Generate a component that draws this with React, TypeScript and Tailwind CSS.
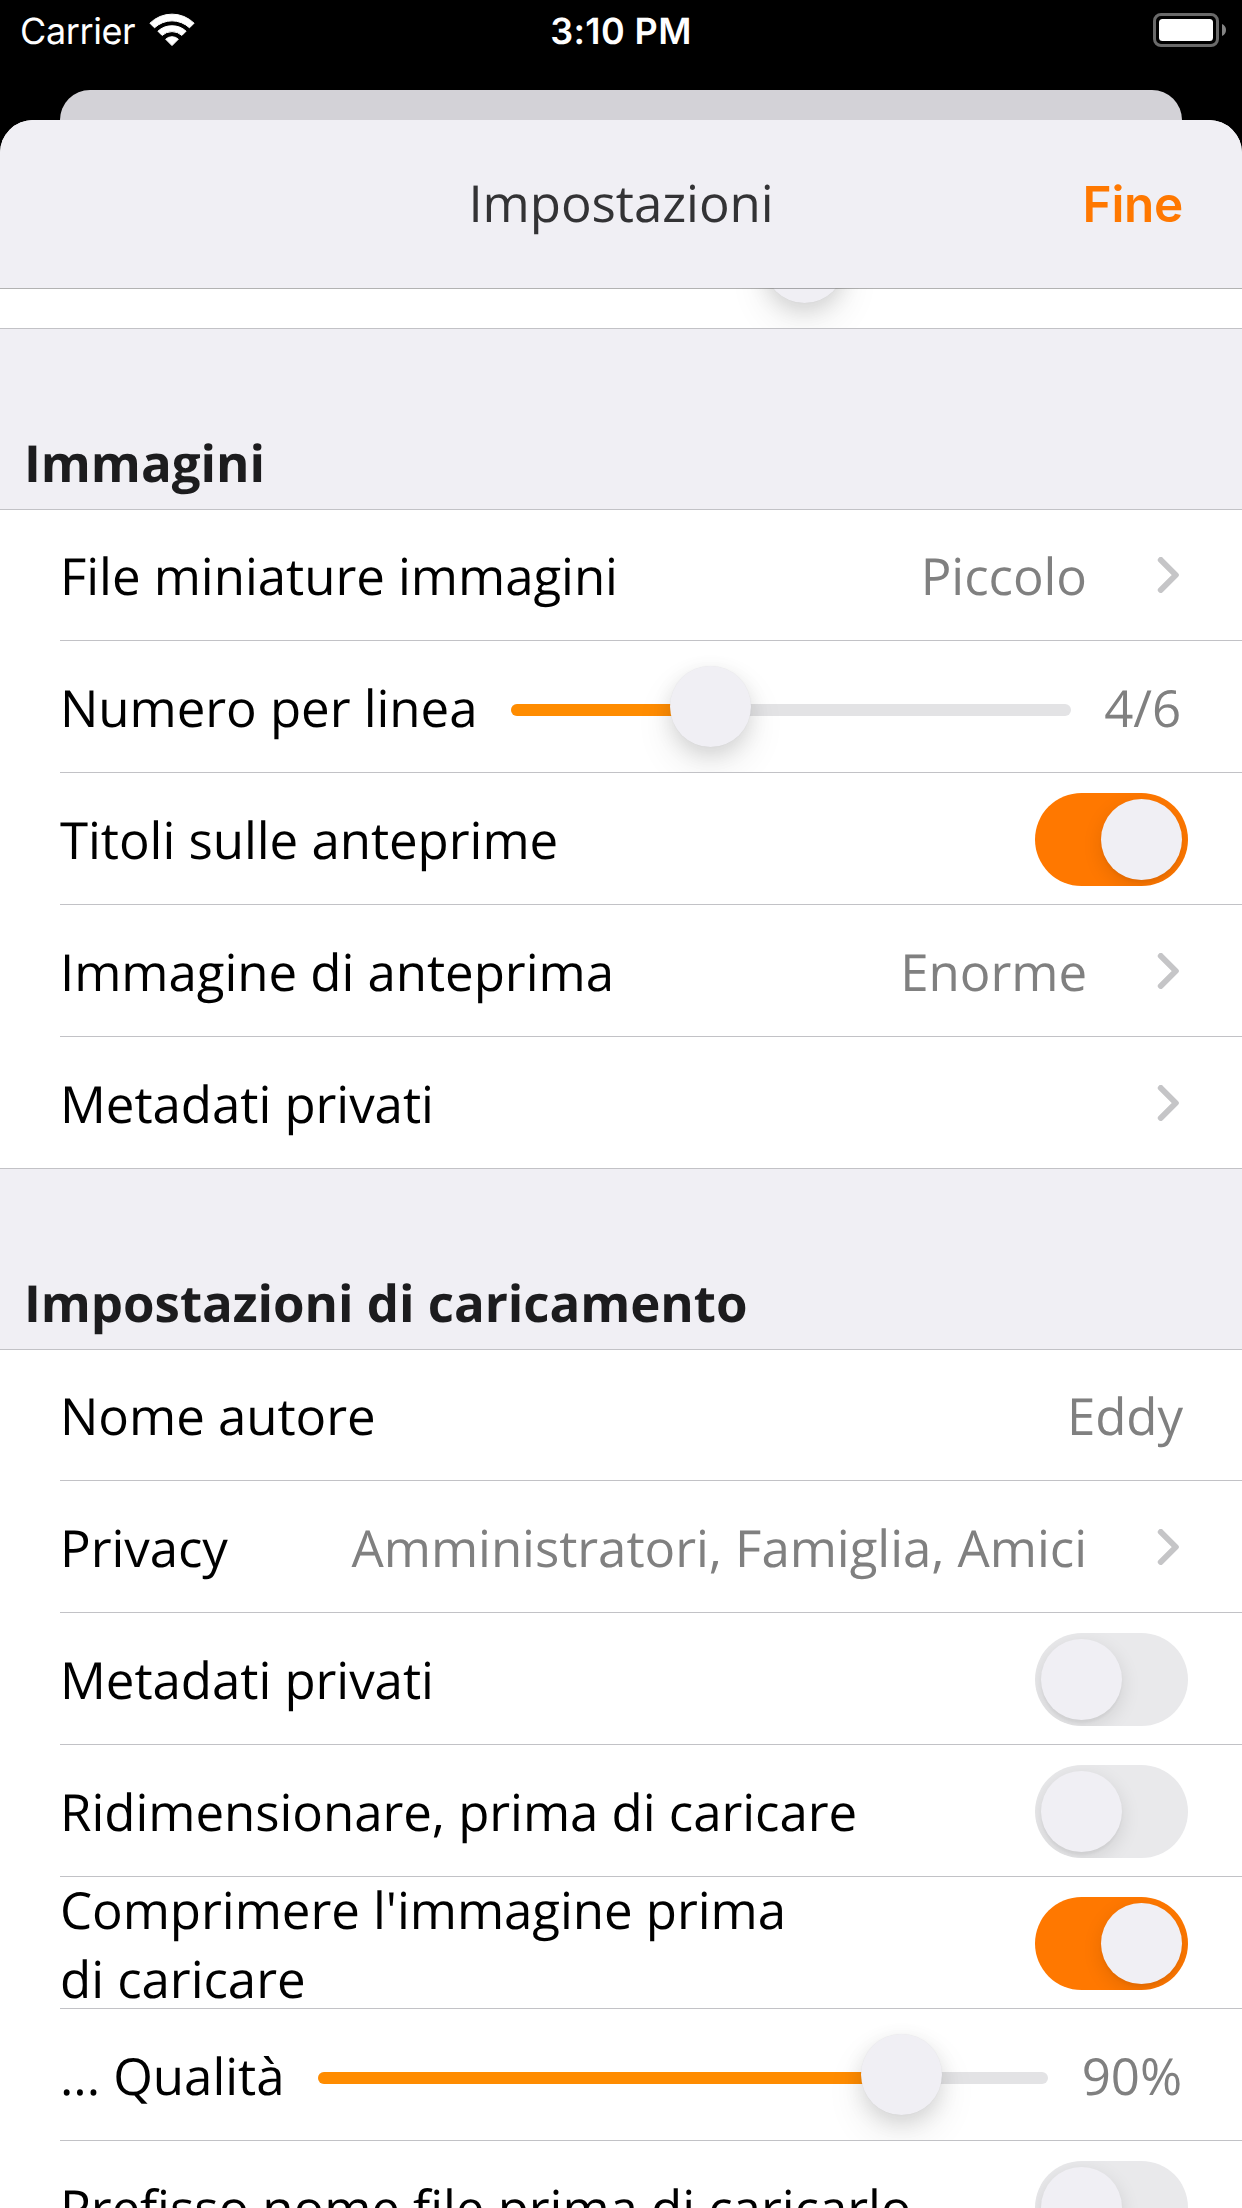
import type { ReactNode } from "react";

function Wifi() {
  return (
    <svg width="46" height="34" viewBox="0 0 46 34" fill="#fff" stroke="#fff" strokeWidth="1" strokeLinejoin="round">
      <path d="M0.9 10.2A31.5 31.5 0 0 1 45.1 10.2L40.5 14.8A25.5 25.5 0 0 0 5.5 14.8Z" />
      <path d="M8.9 18.2A21 21 0 0 1 37.1 18.2L32.9 22.4A14.8 14.8 0 0 0 13.1 22.4Z" />
      <path d="M16.7 26.2A9.2 9.2 0 0 1 29.3 26.2L23 32.6Z" />
    </svg>
  );
}

function Battery() {
  return (
    <svg width="73" height="34" viewBox="0 0 73 34">
      <rect x="1.5" y="1.5" width="63" height="31" rx="6.5" fill="none" stroke="#6a6a6a" strokeWidth="3" />
      <rect x="6" y="6" width="54" height="22" rx="3.5" fill="#fff" />
      <path d="M69 11C71.700 12.200 73 14.300 73 17C73 19.700 71.700 21.800 69 23Z" fill="#848484" />
    </svg>
  );
}

function Chevron() {
  return (
    <svg className="ml-[70px] mr-[62px] shrink-0" width="23" height="36" viewBox="0 0 23 36">
      <path d="M3.800 3L18.800 18L3.800 33" fill="none" stroke="#c5c5c7" strokeWidth="6" strokeLinecap="round" strokeLinejoin="round" />
    </svg>
  );
}

function Toggle({ on = false }: { on?: boolean }) {
  return (
    <div
      className={
        "relative top-px mr-[54px] flex h-[93px] w-[153px] shrink-0 items-center overflow-hidden rounded-full p-[6px] " +
        (on ? "justify-end bg-[#ff7800]" : "justify-start bg-[#e9e9eb]")
      }
    >
      <div className="size-[81px] rounded-full bg-[#f0eff4] shadow-[0_6px_20px_rgba(0,0,0,0.11),0_3px_3px_rgba(0,0,0,0.04)]" />
    </div>
  );
}

function Thumb() {
  return (
    <div className="size-[81px] rounded-full bg-[#f0eff4] shadow-[0_0_1px_rgba(0,0,0,0.08),0_18px_39px_rgba(0,0,0,0.09),0_7px_20px_rgba(0,0,0,0.11)]" />
  );
}

function Slider({ fill, width }: { fill: number; width: string }) {
  return (
    <div className={"relative flex h-[81px] shrink-0 items-center " + width}>
      <div className="relative top-[3.5px] h-3 w-full overflow-hidden rounded-full bg-[#e3e3e5]">
        <div className="h-full bg-[#ff8c00]" style={{ width: fill + 40 }} />
      </div>
      <div className="absolute top-0" style={{ left: fill }}>
        <Thumb />
      </div>
    </div>
  );
}

function Row({ label, children, last, first }: { label: string; children?: ReactNode; last?: boolean; first?: boolean }) {
  return (
    <div className={"shrink-0 " + (first ? "h-[131px]" : "h-[132px]") + " " + (last ? "border-b border-[#c2c2c6]" : "pl-[60px]")}>
      <div
        className={
          "flex h-full items-center overflow-hidden " + (last ? "pl-[60px]" : "border-b border-[#c2c2c6]")
        }
      >
        <span className={"relative shrink-0 whitespace-pre leading-[69px] text-black " + (first ? "top-0" : "top-px")}>{label}</span>
        {children}
      </div>
    </div>
  );
}

function Value({ children }: { children: ReactNode }) {
  return <span className="relative top-[0.5px] ml-auto whitespace-nowrap leading-[69px] text-[#808080]">{children}</span>;
}

function SectionTitle({ children }: { children: ReactNode }) {
  return (
    <h2 className="flex h-[181px] shrink-0 items-end border-b border-[#c2c2c6] bg-[#f0eff4] pb-[12px] pl-6 font-bold leading-[69px] text-[#1c1c1e]">
      {children}
    </h2>
  );
}

export default function App() {
  return (
    <div className="flex h-[2208px] w-[1242px] flex-col overflow-hidden bg-black font-['Open_Sans',sans-serif] text-[51px] tracking-[-0.05px] [text-rendering:geometricPrecision]">
      <div className="grid h-[90px] shrink-0 grid-cols-3 items-start font-['Inter',sans-serif] text-[36px] leading-[44px] text-white">
        <div className="flex pl-[20px] pt-[9px]">
          <span className="w-[129px] tracking-[-0.4px]">Carrier</span>
          <div className="pt-[4px]">
            <Wifi />
          </div>
        </div>
        <div className="pt-[9px] text-center font-semibold tracking-[0.4px]">3:10 PM</div>
        <div className="flex justify-end pr-4 pt-[13px]">
          <Battery />
        </div>
      </div>
      <div className="mx-[60px] h-[30px] shrink-0 rounded-t-[30px] bg-[#d3d2d7]" />
      <div className="flex grow flex-col overflow-hidden rounded-t-[33px] bg-white">
        <header className="grid h-[168px] shrink-0 grid-cols-[1fr_auto_1fr] items-center bg-[#f0eff4] pb-[3px]">
          <span />
          <h1 className="leading-[69px] text-[#333335]">Impostazioni</h1>
          <button className="relative top-px pr-[59px] text-right font-['Inter',sans-serif] text-[49.5px] font-semibold leading-[60px] tracking-[-0.3px] text-[#ff7800]">
            Fine
          </button>
        </header>
        <div className="relative h-[41px] shrink-0 overflow-hidden border-b border-[#c2c2c6]">
          <div className="-mt-[66px] ml-[764px] w-fit">
            <Thumb />
          </div>
          <div className="absolute inset-x-0 top-0 h-px bg-black/30" />
        </div>

        <SectionTitle>Immagini</SectionTitle>
        <Row label="File miniature immagini" first>
          <Value>Piccolo</Value>
          <Chevron />
        </Row>
        <Row label="Numero per linea">
          <div className="ml-auto mr-[33px]">
            <Slider fill={159} width="w-[560px]" />
          </div>
          <span className="relative top-px mr-[61px] text-[#808080]">4/6</span>
        </Row>
        <Row label="Titoli sulle anteprime">
          <div className="ml-auto">
            <Toggle on />
          </div>
        </Row>
        <Row label="Immagine di anteprima">
          <Value>Enorme</Value>
          <Chevron />
        </Row>
        <Row label="Metadati privati" last>
          <div className="ml-auto">
            <Chevron />
          </div>
        </Row>

        <SectionTitle>Impostazioni di caricamento</SectionTitle>
        <Row label="Nome autore" first>
          <Value>
            <span className="pr-[59px]">Eddy</span>
          </Value>
        </Row>
        <Row label="Privacy">
          <Value>Amministratori, Famiglia, Amici</Value>
          <Chevron />
        </Row>
        <Row label="Metadati privati">
          <div className="ml-auto">
            <Toggle />
          </div>
        </Row>
        <Row label="Ridimensionare, prima di caricare">
          <div className="ml-auto">
            <Toggle />
          </div>
        </Row>
        <Row label={"Comprimere l'immagine prima\ndi caricare"}>
          <div className="ml-auto">
            <Toggle on />
          </div>
        </Row>
        <Row label="... Qualità">
          <div className="ml-auto mr-[34px]">
            <Slider fill={543} width="w-[730px]" />
          </div>
          <span className="relative top-px mr-[60px] text-[#808080]">90%</span>
        </Row>
        <Row label="Prefisso nome file prima di caricarlo">
          <div className="ml-auto">
            <Toggle />
          </div>
        </Row>
      </div>
    </div>
  );
}
